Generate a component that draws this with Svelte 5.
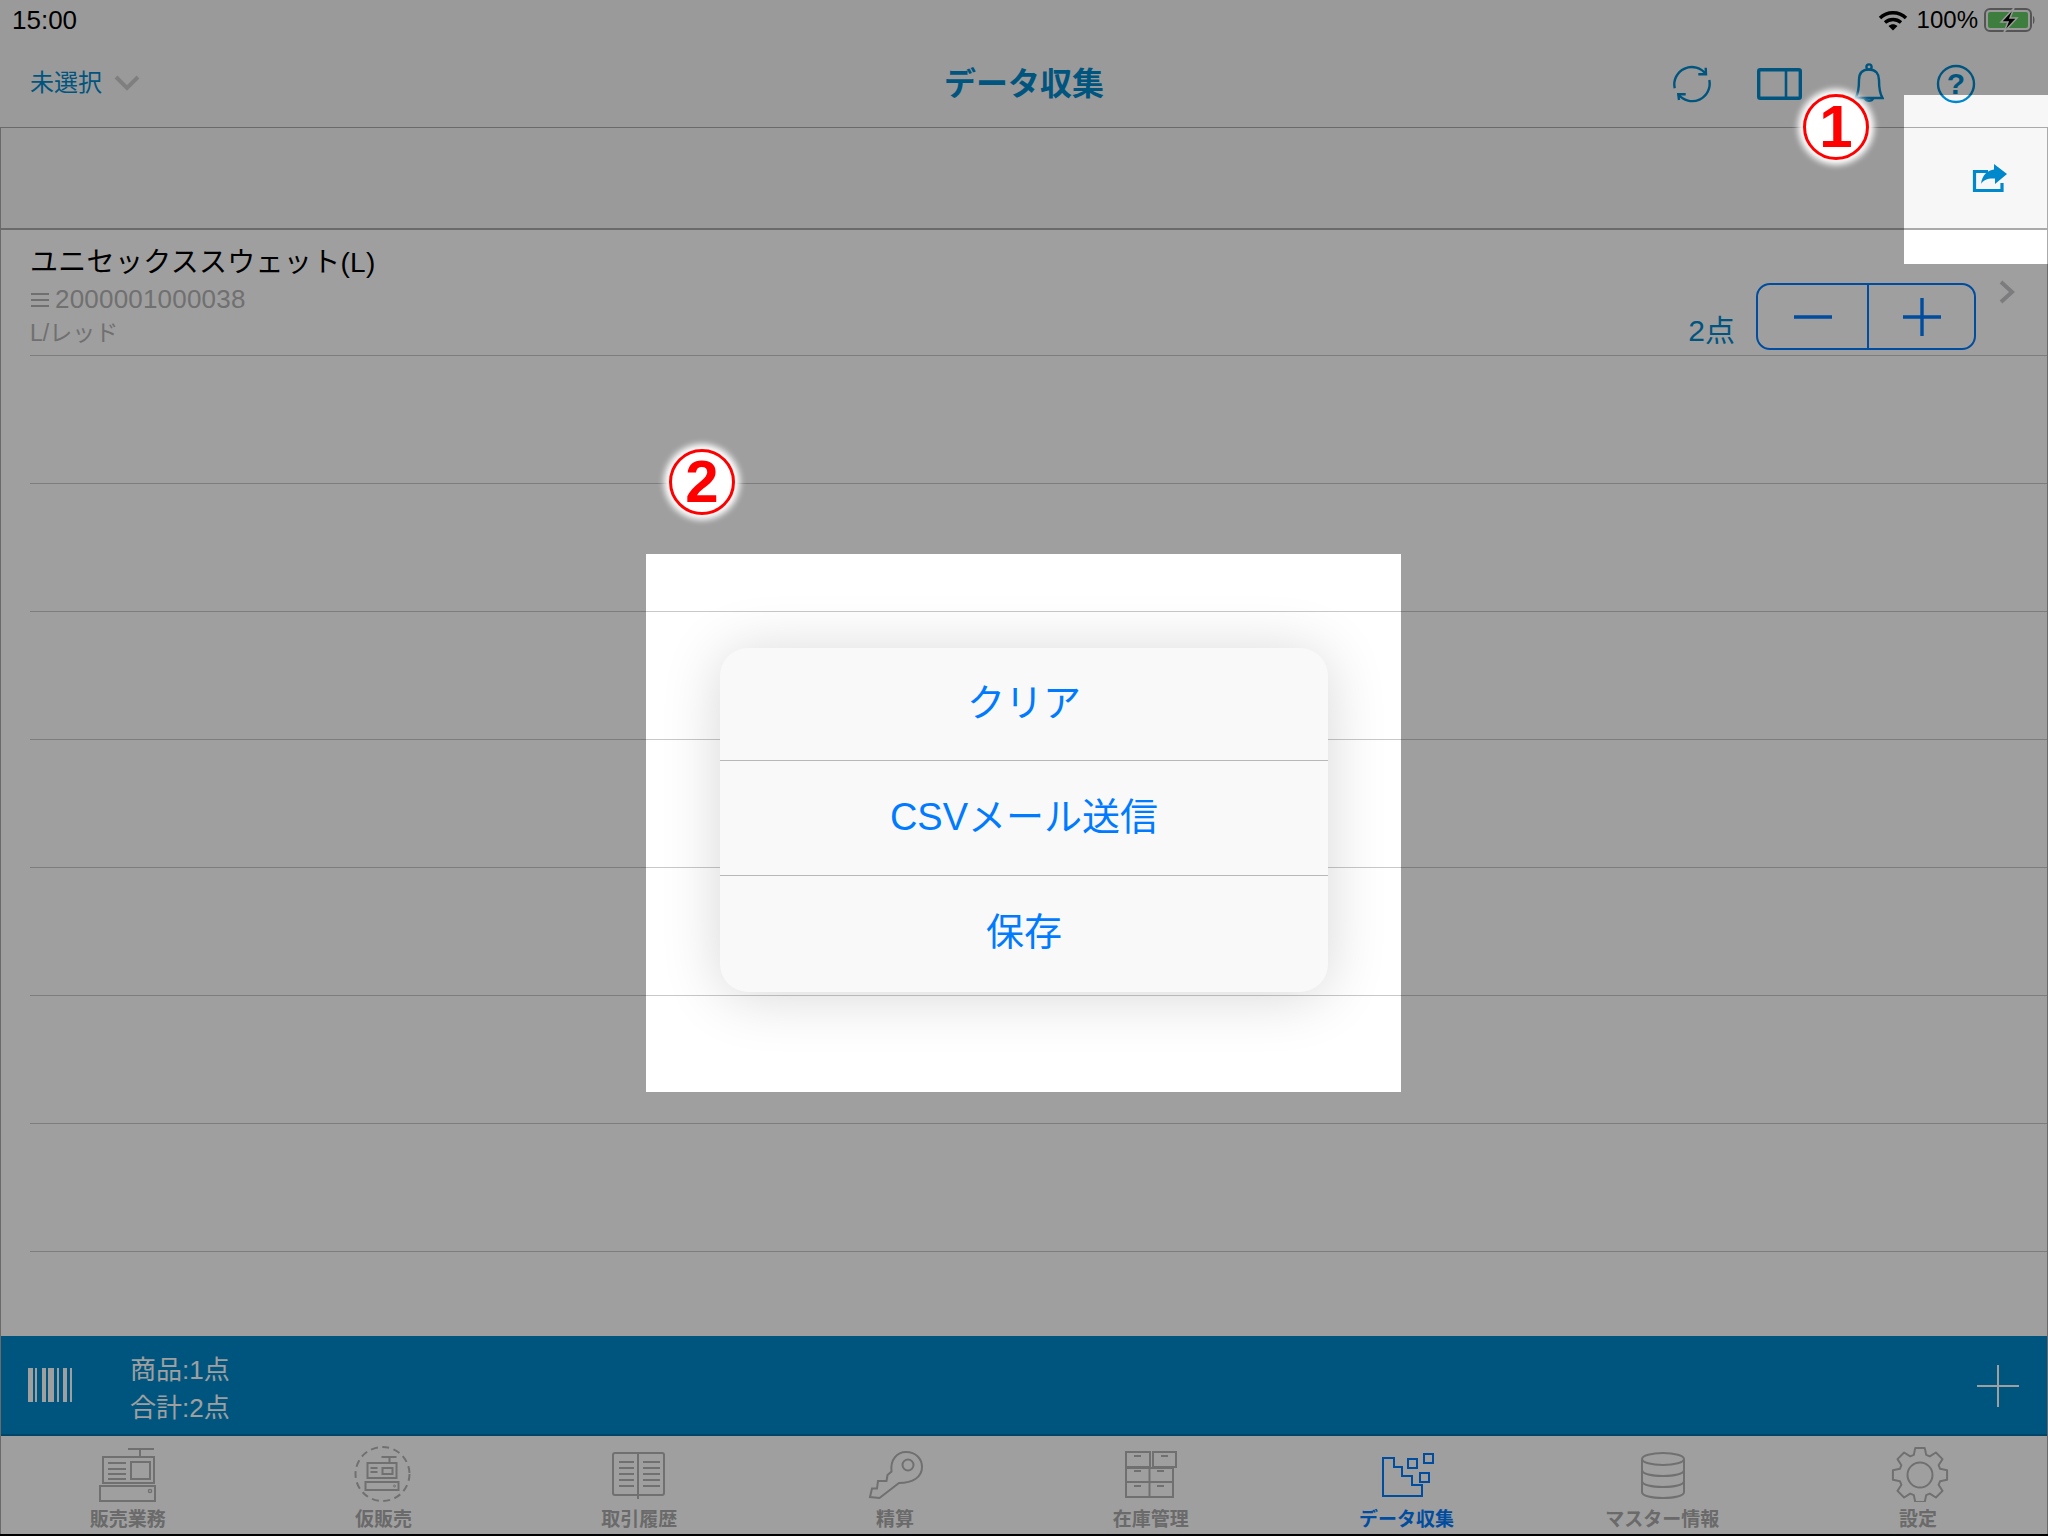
<script>
  const rows = [0, 1, 2, 3, 4, 5, 6];
  const barcode = [[28, 5], [35, 2], [42, 4], [48, 6], [57, 2], [63, 4], [70, 2]];
  const actions = ['クリア', 'CSVメール送信', '保存'];

  // 8 toothed gear, one tooth pointing up
  function gearPath(cx, cy, outer, inner) {
    let d = '';
    for (let i = 0; i < 8; i++) {
      const a = (i * Math.PI) / 4 - Math.PI / 2;
      const pts = [
        [inner, a - 0.3],
        [outer, a - 0.17],
        [outer, a + 0.17],
        [inner, a + 0.3]
      ];
      for (const [r, t] of pts) {
        d += (d ? 'L' : 'M') + (cx + r * Math.cos(t)).toFixed(1) + ' ' + (cy + r * Math.sin(t)).toFixed(1);
      }
    }
    return d + 'Z';
  }
  const gear = gearPath(32, 29, 27.5, 21);
</script>

<div class="screen">
  <div class="status">
    <span>15:00</span>
    <div class="status-right">
      <svg class="wifi" width="30" height="22" viewBox="0 0 30 22">
        <path d="M2 9 C9 2 21 2 28 9" fill="none" stroke="#000" stroke-width="3.4" />
        <path d="M7 13.5 C11.5 9.5 18.5 9.5 23 13.5" fill="none" stroke="#000" stroke-width="3.4" />
        <path d="M10.5 17 C13.5 14.5 16.5 14.5 19.5 17 L15 21.5 Z" fill="#000" />
      </svg>
      <span class="pct">100%</span>
      <svg width="52" height="26" viewBox="0 0 52 26">
        <rect x="1" y="2" width="46" height="22" rx="5" fill="none" stroke="#888" stroke-width="2" />
        <rect x="4" y="5" width="40" height="16" rx="2" fill="#63c963" />
        <path d="M49 9 C51 10 51 16 49 17 Z" fill="#888" />
        <path d="M30 1 L17 15 H24 L20 25 L33 11 H26 Z" fill="#000" stroke="#f7f7f7" stroke-width="1.5" />
      </svg>
    </div>
  </div>

  <header class="nav">
    <div class="nav-left">
      <span>未選択</span>
      <svg width="26" height="16" viewBox="0 0 26 16"><path d="M2 2 L13 13 L24 2" fill="none" stroke="#ccc" stroke-width="4" /></svg>
    </div>
    <h1>データ収集</h1>
    <div class="nav-icons">
      <svg class="ic-sync" width="44" height="44" viewBox="0 0 44 44" fill="none" stroke="#0088cc" stroke-width="2.4">
        <path d="M4.7 26.3 A17.5 17.5 0 0 1 36 12.3" />
        <path d="M39.3 18 A17.5 17.5 0 0 1 8.3 32.3" />
        <path d="M28.3 12.3 H36 L35.7 5.7" />
        <path d="M15.7 32.3 H8.3 L9 38" />
      </svg>
      <svg class="ic-split" width="46" height="32" viewBox="0 0 46 32" fill="none" stroke="#0088cc">
        <rect x="1.7" y="1.7" width="41.6" height="28.6" rx="1.5" stroke-width="3.4" />
        <path d="M29 2 V30" stroke-width="2.6" />
      </svg>
      <svg class="ic-bell" width="30" height="42" viewBox="0 0 30 42" fill="none" stroke="#0088cc" stroke-width="2.4">
        <circle cx="15" cy="4" r="2.6" />
        <path d="M15 6.5 C8 6.5 5 11 5 17 C5 25 4 31 1.5 35 H28.5 C26 31 25 25 25 17 C25 11 22 6.5 15 6.5 Z" />
        <path d="M10.5 35 A5 5 0 0 0 19.5 35" />
      </svg>
      <svg class="ic-help" width="40" height="40" viewBox="0 0 40 40">
        <circle cx="20" cy="20" r="18" fill="none" stroke="#0088cc" stroke-width="2.4" />
        <text x="20" y="30" text-anchor="middle" class="help-q">?</text>
      </svg>
    </div>
  </header>

  <main class="body">
    <div class="toolbar">
      <svg width="36" height="30" viewBox="0 0 36 30">
        <path d="M16 8.5 H2.5 V27.5 H30 V20" fill="none" stroke="#0088cc" stroke-width="3.2" />
        <path d="M22 1 L35 11 L23 21 V15.5 C16 15 11 17 9 21 C10 12 16 7 22 6.5 Z" fill="#0088cc" />
      </svg>
    </div>

    <div class="list">
      <div class="row first">
        <div class="item">
          <div class="item-name">ユニセックススウェット(L)</div>
          <div class="item-code">
            <svg width="20" height="16" viewBox="0 0 20 16"><path d="M1 2 H19 M1 8 H19 M1 14 H19" stroke="#b4b4b4" stroke-width="2" /></svg>
            <span>2000001000038</span>
          </div>
          <div class="item-variant">L/レッド</div>
        </div>
        <div class="qty">2点</div>
        <div class="stepper">
          <button aria-label="minus"><svg width="38" height="38" viewBox="0 0 38 38"><path d="M0 19 H38" stroke="#007aff" stroke-width="3.4" /></svg></button>
          <button aria-label="plus"><svg width="38" height="38" viewBox="0 0 38 38"><path d="M0 19 H38 M19 0 V38" stroke="#007aff" stroke-width="3.4" /></svg></button>
        </div>
        <svg class="chev" width="16" height="24" viewBox="0 0 16 24"><path d="M2 2 L13 12 L2 22" fill="none" stroke="#c7c7cc" stroke-width="4" /></svg>
      </div>
      {#each rows as r (r)}
        <div class="row"></div>
      {/each}
    </div>

    <div class="bar">
      <svg class="barcode" width="44" height="34" viewBox="28 0 44 34">
        {#each barcode as [x, w]}
          <rect {x} y="0" width={w} height="34" fill="#fff" />
        {/each}
      </svg>
      <div class="totals">
        <div>商品:1点</div>
        <div>合計:2点</div>
      </div>
      <svg class="bar-plus" width="42" height="42" viewBox="0 0 42 42"><path d="M0 21 H42 M21 0 V42" stroke="#fff" stroke-width="2" /></svg>
    </div>

    <nav class="tabs">
      <div class="tab">
        <svg width="64" height="56" viewBox="0 0 64 56" fill="none" stroke="#b4b4b4" stroke-width="2">
          <path d="M31 3 H57 M43 3 V11" />
          <rect x="6" y="11" width="51" height="26" />
          <rect x="34" y="16" width="19" height="17" />
          <path d="M11 17 H29 M11 23 H29 M11 28 H29 M11 33 H29" />
          <rect x="3" y="40" width="55" height="15" />
          <circle cx="53" cy="45" r="1.6" stroke-width="1.4" />
        </svg>
        <span>販売業務</span>
      </div>
      <div class="tab">
        <svg width="64" height="56" viewBox="2.5 0 64 56" fill="none" stroke="#b4b4b4" stroke-width="2">
          <circle cx="32" cy="28" r="27" stroke-dasharray="7 4.5" />
          <path d="M31 11 H46 M39 11 V17" />
          <rect x="17" y="17" width="29" height="15" />
          <rect x="32" y="22" width="10" height="6" />
          <path d="M20 22 H27 M20 26 H27" />
          <rect x="15" y="36" width="33" height="8" />
          <circle cx="44" cy="40" r="1" stroke-width="1" />
        </svg>
        <span>仮販売</span>
      </div>
      <div class="tab">
        <svg width="64" height="56" viewBox="0 0 64 56" fill="none" stroke="#b4b4b4" stroke-width="2">
          <path d="M7 7 H30 V49 H7 Q5 49 5 47 V9 Q5 7 7 7 Z M30 7 H54 Q56 7 56 9 V47 Q56 49 54 49 H30 M30 49 V53" />
          <path d="M11 16 H26 M11 22 H26 M11 28 H26 M11 34 H26 M11 40 H26 M35 16 H52 M35 22 H52 M35 28 H52 M35 34 H52 M35 40 H52" />
        </svg>
        <span>取引履歴</span>
      </div>
      <div class="tab">
        <svg width="64" height="56" viewBox="0 0 64 56" fill="none" stroke="#b4b4b4" stroke-width="2">
          <path d="M6 51 L8 42.5 H13 L14 35 H22.5 L23.5 29 L27.5 25.5 C26 14 33 6 42 6 C52 6 58 13 58 21 C58 31 49 37 35 37 L15.5 52 Z" />
          <circle cx="44" cy="19" r="5.5" />
        </svg>
        <span>精算</span>
      </div>
      <div class="tab">
        <svg width="64" height="56" viewBox="0 0 64 56" fill="none" stroke="#b4b4b4" stroke-width="2">
          <rect x="6" y="6" width="24" height="15" />
          <rect x="33" y="6" width="23" height="15" />
          <rect x="6" y="22" width="47" height="14" />
          <rect x="6" y="36" width="47" height="15" />
          <path d="M29.5 22 V51" />
          <path d="M14 10 H21 M41 10 H48 M14 25 H21 M37 25 H44 M14 40 H21 M37 40 H44" />
        </svg>
        <span>在庫管理</span>
      </div>
      <div class="tab active">
        <svg width="64" height="56" viewBox="0 0 64 56" fill="none" stroke="#007aff" stroke-width="2">
          <path d="M7 12 H18 V21 H26 V30 H36 V39 H46 V50 H7 Z" />
          <rect x="32" y="13" width="9" height="9" />
          <rect x="48" y="8" width="9" height="9" />
          <rect x="44" y="27" width="9" height="9" />
        </svg>
        <span>データ収集</span>
      </div>
      <div class="tab">
        <svg width="64" height="56" viewBox="-1 0 64 56" fill="none" stroke="#b4b4b4" stroke-width="2">
          <ellipse cx="31" cy="13" rx="21" ry="6" />
          <path d="M10 13 V46 C10 50 20 52 31 52 C42 52 52 50 52 46 V13" />
          <path d="M10 24 C10 28 20 30 31 30 C42 30 52 28 52 24 M10 35 C10 39 20 41 31 41 C42 41 52 39 52 35" />
        </svg>
        <span>マスター情報</span>
      </div>
      <div class="tab">
        <svg width="64" height="56" viewBox="-1 0 64 56" fill="none" stroke="#b4b4b4" stroke-width="2">
          <path d={gear} stroke-linejoin="round" />
          <circle cx="32" cy="29" r="12.5" />
        </svg>
        <span>設定</span>
      </div>
    </nav>
  </main>
  <div class="home-edge"></div>

  <!-- dim layer with the two highlighted cut-outs -->
  <div class="dim"></div>

  <div class="sheet">
    {#each actions as label}
      <button>{label}</button>
    {/each}
  </div>

  <div class="mark mark-1">1</div>
  <div class="mark mark-2">2</div>
</div>

<style>
  :global(body) {
    margin: 0;
    background: #fff;
  }

  .screen {
    position: relative;
    width: 2048px;
    height: 1536px;
    overflow: hidden;
    display: flex;
    flex-direction: column;
    background: #fff;
    font-family: "Liberation Sans", "Noto Sans CJK JP", sans-serif;
  }

  .status {
    height: 40px;
    flex: none;
    display: flex;
    align-items: center;
    justify-content: space-between;
    padding: 0 12px;
    background: #f7f7f7;
    color: #000;
    font-size: 26px;
  }

  .status-right {
    display: flex;
    align-items: center;
    gap: 12px;
  }

  .status-right .wifi {
    margin-right: -3px;
  }

  .status-right .pct {
    font-size: 24px;
    margin-right: -6px;
  }

  .nav {
    height: 88px;
    flex: none;
    display: grid;
    grid-template-columns: 1fr auto 1fr;
    align-items: center;
    background: #f7f7f7;
    box-sizing: border-box;
    border-bottom: 1px solid #aaa;
    padding-bottom: 1px;
  }

  .nav-left {
    display: flex;
    align-items: center;
    gap: 12px;
    padding-left: 30px;
    color: #0088cc;
    font-size: 24px;
  }

  .nav-left span {
    margin-bottom: 5px;
  }

  .nav h1 {
    margin: 0 0 5px;
    font-size: 32px;
    font-weight: 700;
    color: #0088cc;
  }

  .nav-icons {
    display: flex;
    align-items: center;
    justify-content: flex-end;
    padding-right: 72px;
  }

  .ic-sync { margin: 2px 43px 0 0; }
  .ic-split { margin: 1px 51px 0 0; }
  .ic-bell { margin: 2px 52px 0 0; }
  .ic-help { margin-top: 2px; }

  .help-q {
    font-size: 30px;
    font-weight: 700;
    fill: #0088cc;
  }

  .body {
    flex: 1;
    display: flex;
    flex-direction: column;
    box-sizing: border-box;
    border-left: 1px solid #aaa;
    border-right: 1px solid #aaa;
  }

  .toolbar {
    height: 100px;
    flex: none;
    display: flex;
    align-items: center;
    justify-content: flex-end;
    padding-right: 39px;
    background: #f7f7f7;
    border-bottom: 2px solid #aaa;
  }

  .list {
    flex: 1;
    padding-left: 29px;
  }

  .row {
    height: 127px;
    border-bottom: 1px solid #c8c8c8;
  }

  .row.first {
    height: 125px;
    display: flex;
    align-items: flex-start;
  }

  .item {
    flex: 1;
    padding-top: 15px;
  }

  .item-name {
    font-size: 28px;
    line-height: 36px;
    color: #000;
    letter-spacing: 0.3px;
  }

  .item-code {
    display: flex;
    align-items: center;
    gap: 5px;
    font-size: 26px;
    line-height: 37px;
    letter-spacing: 0.2px;
    color: #b4b4b4;
  }

  .item-variant {
    font-size: 23px;
    line-height: 30px;
    color: #b4b4b4;
  }

  .qty {
    align-self: flex-end;
    margin: 0 21px 6px 0;
    font-size: 30px;
    line-height: 36px;
    color: #0088cc;
  }

  .stepper {
    align-self: flex-end;
    margin-bottom: 5px;
    width: 220px;
    height: 67px;
    box-sizing: border-box;
    border: 2px solid #007aff;
    border-radius: 14px;
    display: flex;
  }

  .stepper button {
    flex: 1;
    padding: 0;
    border: 0;
    background: none;
    display: flex;
    align-items: center;
    justify-content: center;
  }

  .stepper button:first-child {
    flex: none;
    width: 109px;
  }

  .stepper button + button {
    border-left: 2px solid #007aff;
  }

  .chev {
    margin: 50px 32px 0 23px;
    flex: none;
  }

  .bar {
    height: 98px;
    flex: none;
    border-bottom: 2px solid #006ea6;
    background: #0088cc;
    color: #fff;
    display: flex;
    align-items: center;
    padding-left: 27px;
    padding-right: 28px;
  }

  .totals {
    flex: 1;
    margin: 7px 0 0 58px;
    font-size: 26px;
    line-height: 38px;
  }

  .bar-plus {
    margin-top: 2px;
  }

  .tabs {
    height: 98px;
    flex: none;
    display: grid;
    grid-template-columns: repeat(8, 1fr);
    background: #fff;
  }

  .tab {
    display: flex;
    flex-direction: column;
    align-items: center;
    padding-top: 10px;
    color: #aaa;
    font-size: 19px;
    font-weight: 700;
    line-height: 26px;
  }

  .tab.active {
    color: #007aff;
  }

  .tab span {
    margin-top: 5px;
    margin-right: 2px;
  }

  .home-edge {
    height: 2px;
    flex: none;
    background: #000;
  }

  .dim {
    position: absolute;
    inset: 0;
    background: rgba(0, 0, 0, 0.375);
    clip-path: path(evenodd, "M0 0H2048V1536H0Z M1904 95H2048V264H1904Z M646 554H1401V1092H646Z");
  }

  .sheet {
    position: absolute;
    left: 720px;
    top: 648px;
    width: 608px;
    height: 344px;
    display: flex;
    flex-direction: column;
    background: #f9f9f9;
    border-radius: 28px;
    box-shadow: 0 4px 60px rgba(0, 0, 0, 0.16);
  }

  .sheet button {
    height: 115px;
    flex: none;
    padding: 0 0 9px;
    border: 0;
    background: none;
    color: #007aff;
    font: inherit;
    font-size: 38px;
  }

  .sheet button:first-child {
    height: 112px;
  }

  .sheet button + button {
    border-top: 1px solid #b8b8b8;
  }

  .mark {
    position: absolute;
    width: 66px;
    height: 66px;
    box-sizing: border-box;
    border: 3px solid #f00;
    border-radius: 50%;
    background: #fff;
    box-shadow: 0 0 6px 5px #fff;
    color: #f00;
    font-size: 60px;
    font-weight: 700;
    line-height: 60px;
    text-align: center;
  }

  .mark-1 { left: 1803px; top: 94px; }
  .mark-2 { left: 669px; top: 449px; }
</style>
